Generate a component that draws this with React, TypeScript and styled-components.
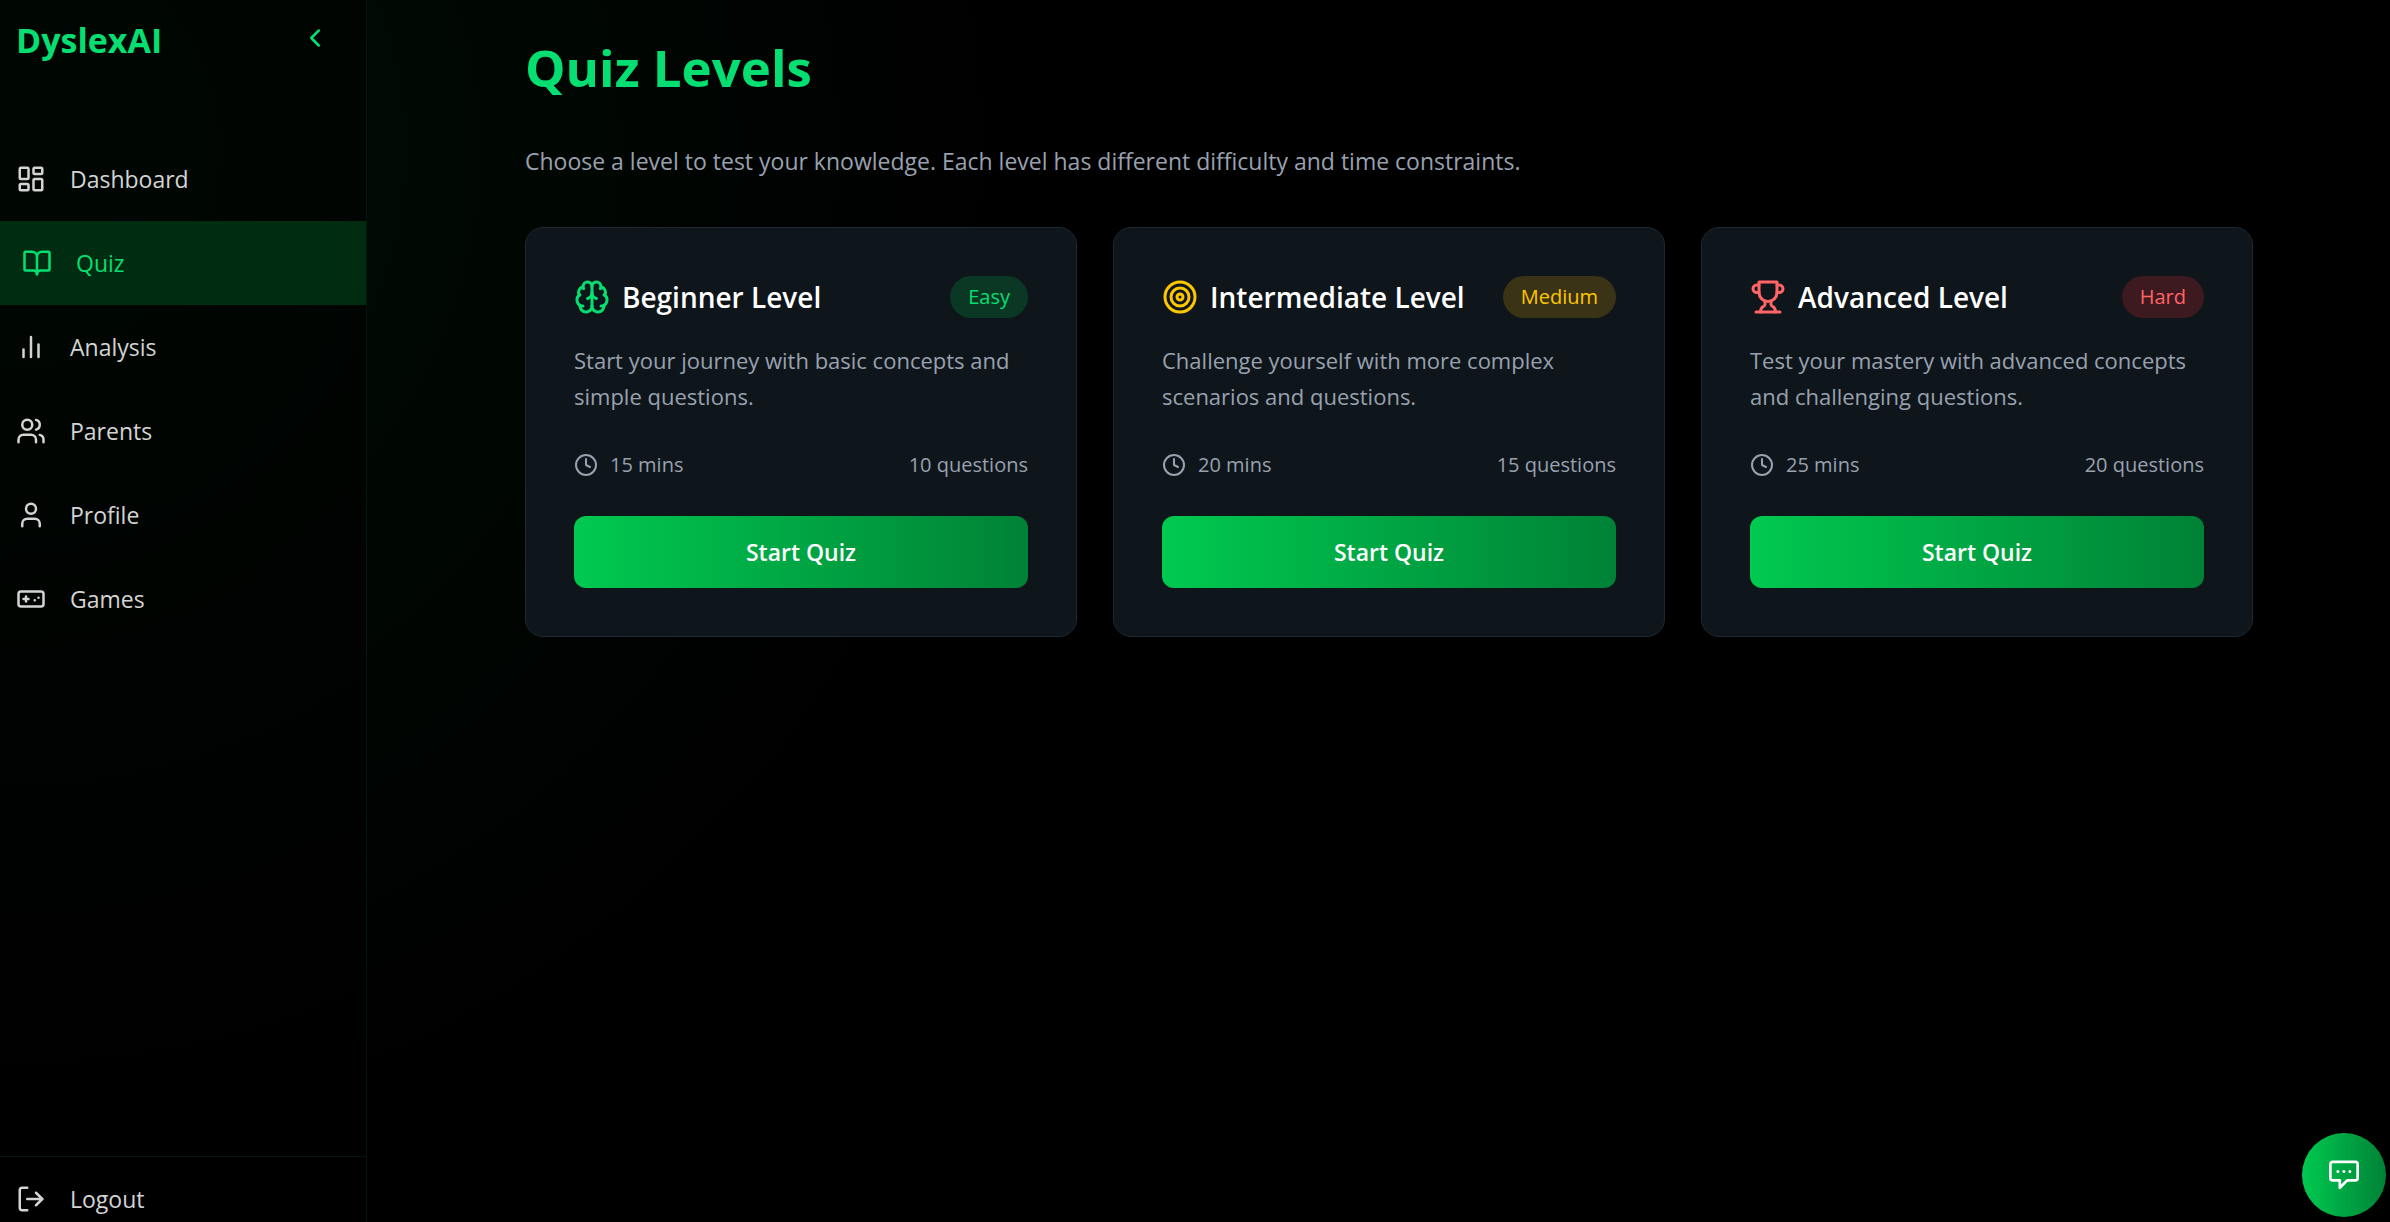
import React from "react";
import styled, { createGlobalStyle } from "styled-components";
import {
  BookOpen,
  Brain,
  ChevronLeft,
  Clock,
  LayoutDashboard,
  LogOut,
  Target,
  User,
  Users,
} from "lucide-react";

const GlobalStyle = createGlobalStyle`
  *, *::before, *::after { box-sizing: border-box; }
  body {
    margin: 0;
    background: #000;
    color: #fff;
    font-family: "Segoe UI", "Open Sans", "Noto Sans", sans-serif;
    font-size: 23px;
    line-height: 36px;
  }
  h1, h2, p, ul { margin: 0; padding: 0; }
  button { font: inherit; color: inherit; border: 0; background: none; padding: 0; cursor: pointer; }
  svg { flex: none; display: block; }
`;

const Page = styled.div`
  display: flex;
  min-height: 100vh;
  background: radial-gradient(circle 1000px at 0 150px, #000f06, #000 100%);
`;

const Sidebar = styled.aside`
  flex: none;
  display: flex;
  flex-direction: column;
  width: 367px;
  min-height: 100vh;
  border-right: 1px solid #03170b;
  background: rgba(0, 0, 0, 0.5);
`;

const Brand = styled.div`
  display: flex;
  align-items: flex-start;
  justify-content: space-between;
  height: 76px;
  padding: 23px 36px 0 16px;
  margin-bottom: 61px;
  color: #05df72;
`;

const BrandName = styled.span`
  font-size: 34px;
  line-height: 34px;
  font-weight: 700;
`;

const Nav = styled.ul`
  flex: 1;
  list-style: none;
`;

const NavLink = styled.a<{ $active?: boolean }>`
  display: flex;
  align-items: center;
  gap: 24px;
  height: 84px;
  padding-left: ${(p) => (p.$active ? 22 : 16)}px;
  color: ${(p) => (p.$active ? "#05df72" : "#d4d4d4")};
  background: ${(p) => (p.$active ? "rgba(0, 201, 80, 0.2)" : "none")};
  text-decoration: none;
`;

const SidebarFooter = styled.div`
  border-top: 1px solid #03170b;
  padding: 24px 0 5px;
`;

const LogoutButton = styled.button`
  display: flex;
  align-items: center;
  gap: 24px;
  width: 100%;
  height: 36px;
  padding: 0 16px;
  color: #d4d4d4;
`;

const Main = styled.main`
  flex: 1;
  min-width: 0;
  padding: 37px 0 48px 21px;
`;

const Container = styled.div`
  max-width: 1728px;
  margin: 0 auto;
`;

const Title = styled.h1`
  margin-bottom: 46px;
  color: #05df72;
  font-size: 51px;
  line-height: 60px;
  font-weight: 700;
`;

const Lead = styled.p`
  margin-bottom: 48px;
  color: #99a1af;
`;

const Grid = styled.div`
  display: grid;
  grid-template-columns: repeat(3, minmax(0, 1fr));
  gap: 36px;
`;

const Card = styled.article`
  padding: 48px;
  border: 1px solid #1e2734;
  border-radius: 18px;
  background: rgba(18, 26, 34, 0.8);
`;

const CardHeader = styled.header`
  display: flex;
  align-items: center;
  justify-content: space-between;
  margin-bottom: 24px;
`;

const CardHeading = styled.div<{ $color: string }>`
  display: flex;
  align-items: center;
  gap: 12px;
  color: ${(p) => p.$color};
`;

const CardTitle = styled.h2`
  color: #fff;
  font-size: 28px;
  line-height: 42px;
  font-weight: 600;
`;

const Badge = styled.span<{ $color: string; $fill: string }>`
  padding: 6px 18px;
  border-radius: 21px;
  background: ${(p) => p.$fill};
  color: ${(p) => p.$color};
  font-size: 20px;
  line-height: 30px;
`;

const Description = styled.p`
  margin-bottom: 36px;
  color: #99a1af;
  font-size: 22px;
`;

const Meta = styled.div`
  display: flex;
  align-items: center;
  justify-content: space-between;
  margin-bottom: 36px;
  color: #99a1af;
  font-size: 20px;
  line-height: 30px;
`;

const Duration = styled.span`
  display: flex;
  align-items: center;
  gap: 12px;
`;

const StartButton = styled.button`
  display: block;
  width: 100%;
  height: 72px;
  border-radius: 12px;
  background: linear-gradient(to right, #00c950, #008236);
  color: #fff;
  font-weight: 600;
`;

const ChatButton = styled.button`
  position: fixed;
  right: 4px;
  bottom: 5px;
  display: flex;
  align-items: center;
  justify-content: center;
  width: 84px;
  height: 84px;
  border-radius: 50%;
  background: linear-gradient(to right, #00c950, #008236);
`;

const StrokeIcon = ({ size, children }: { size: number; children: React.ReactNode }) => (
  <svg width={size} height={size} viewBox="0 0 24 24" fill="none" stroke="currentColor" strokeWidth="2" strokeLinecap="round" strokeLinejoin="round" aria-hidden="true">
    {children}
  </svg>
);

const BarsIcon = ({ size }: { size: number }) => (
  <StrokeIcon size={size}>
    <path d="M18 20V10M12 20V4M6 20v-6" />
  </StrokeIcon>
);

const GamepadIcon = ({ size }: { size: number }) => (
  <StrokeIcon size={size}>
    <rect x="2" y="6" width="20" height="12" rx="2" />
    <path d="M6 12h4M8 10v4M15 13h.01M18 11h.01" />
  </StrokeIcon>
);

const TrophyIcon = ({ size }: { size: number }) => (
  <StrokeIcon size={size}>
    <path d="M6 9H4.5a2.5 2.5 0 0 1 0-5H6" />
    <path d="M18 9h1.5a2.5 2.5 0 0 0 0-5H18" />
    <path d="M4 22h16" />
    <path d="M10 14.66V17c0 .55-.47.98-.97 1.21C7.85 18.75 7 20.24 7 22" />
    <path d="M14 14.66V17c0 .55.47.98.97 1.21C16.15 18.75 17 20.24 17 22" />
    <path d="M18 2H6v7a6 6 0 0 0 12 0V2Z" />
  </StrokeIcon>
);

const ChatIcon = () => (
  <svg width="36" height="36" viewBox="0 0 24 24" fill="none" stroke="#fff" strokeWidth="1.8" strokeLinejoin="round" aria-hidden="true">
    <path d="M4.5 3.2h15A1.6 1.6 0 0 1 21.1 4.8v9.2a1.6 1.6 0 0 1-1.6 1.6h-5.4l-4.9 4.9v-4.9H4.5a1.6 1.6 0 0 1-1.6-1.6V4.8a1.6 1.6 0 0 1 1.6-1.6z" />
    <path d="M7.9 9.6h.01M11.9 9.6h.01M15.9 9.6h.01" strokeLinecap="round" strokeWidth="2" />
  </svg>
);

const navItems: { label: string; icon: React.ReactNode; active?: boolean }[] = [
  { label: "Dashboard", icon: <LayoutDashboard size={30} /> },
  { label: "Quiz", icon: <BookOpen size={30} />, active: true },
  { label: "Analysis", icon: <BarsIcon size={30} /> },
  { label: "Parents", icon: <Users size={30} /> },
  { label: "Profile", icon: <User size={30} /> },
  { label: "Games", icon: <GamepadIcon size={30} /> },
];

interface Level {
  title: string;
  badge: string;
  icon: React.ReactNode;
  color: string;
  fill: string;
  text: string;
  minutes: number;
  questions: number;
}

const levels: Level[] = [
  { title: "Beginner Level", badge: "Easy", icon: <Brain size={36} />, color: "#05df72", fill: "rgba(0, 201, 80, 0.2)", text: "Start your journey with basic concepts and simple questions.", minutes: 15, questions: 10 },
  { title: "Intermediate Level", badge: "Medium", icon: <Target size={36} />, color: "#fdc700", fill: "rgba(240, 177, 0, 0.2)", text: "Challenge yourself with more complex scenarios and questions.", minutes: 20, questions: 15 },
  { title: "Advanced Level", badge: "Hard", icon: <TrophyIcon size={36} />, color: "#ff6467", fill: "rgba(251, 44, 54, 0.2)", text: "Test your mastery with advanced concepts and challenging questions.", minutes: 25, questions: 20 },
];

const LevelCard = ({ level }: { level: Level }) => (
  <Card>
    <CardHeader>
      <CardHeading $color={level.color}>
        {level.icon}
        <CardTitle>{level.title}</CardTitle>
      </CardHeading>
      <Badge $color={level.color} $fill={level.fill}>{level.badge}</Badge>
    </CardHeader>
    <Description>{level.text}</Description>
    <Meta>
      <Duration>
        <Clock size={24} />
        {level.minutes} mins
      </Duration>
      <span>{level.questions} questions</span>
    </Meta>
    <StartButton type="button">Start Quiz</StartButton>
  </Card>
);

export default function App() {
  return (
    <>
      <GlobalStyle />
      <Page>
        <Sidebar>
          <Brand>
            <BrandName>DyslexAI</BrandName>
            <button type="button" aria-label="Collapse sidebar">
              <ChevronLeft size={30} />
            </button>
          </Brand>
          <Nav>
            {navItems.map((item) => (
              <li key={item.label}>
                <NavLink href="#" $active={item.active}>
                  {item.icon}
                  {item.label}
                </NavLink>
              </li>
            ))}
          </Nav>
          <SidebarFooter>
            <LogoutButton type="button">
              <LogOut size={30} />
              Logout
            </LogoutButton>
          </SidebarFooter>
        </Sidebar>
        <Main>
          <Container>
            <Title>Quiz Levels</Title>
            <Lead>Choose a level to test your knowledge. Each level has different difficulty and time constraints.</Lead>
            <Grid>
              {levels.map((level) => (
                <LevelCard key={level.title} level={level} />
              ))}
            </Grid>
          </Container>
        </Main>
      </Page>
      <ChatButton type="button" aria-label="Open chat">
        <ChatIcon />
      </ChatButton>
    </>
  );
}
